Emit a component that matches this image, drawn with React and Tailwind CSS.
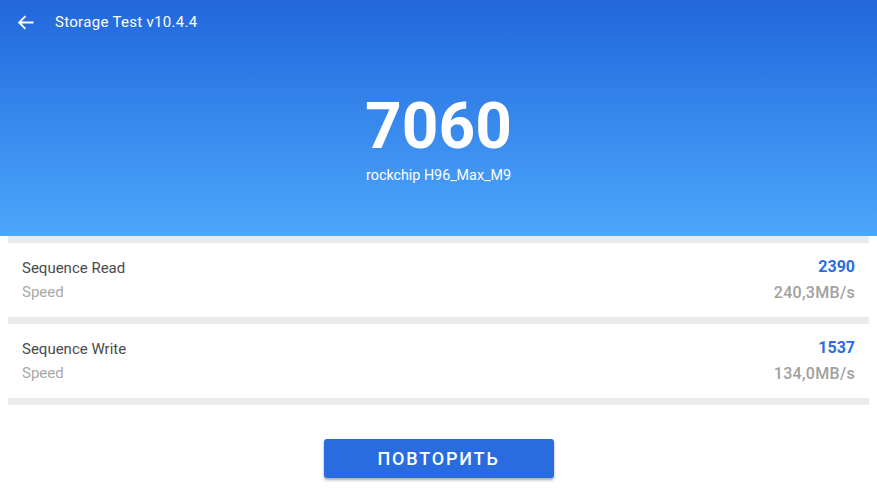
import React from "react";

const results = [
  { name: "Sequence Read", score: "2390", speed: "240,3MB/s" },
  { name: "Sequence Write", score: "1537", speed: "134,0MB/s" },
];

export default function App() {
  return (
    <div className="w-[877px] h-[493px] bg-white overflow-hidden font-['Roboto',sans-serif]">
      {/* header */}
      <div className="h-[236px] bg-gradient-to-b from-[#2267dc] to-[#4ea6fb] text-white flex flex-col">
        <div className="h-[44px] flex items-center">
          <svg className="ml-[17px] w-[17px] h-[17px]" viewBox="0 0 24 24" fill="none" stroke="white" strokeWidth="2.6" strokeLinecap="square">
            <path d="M22 12H4M11 4l-8 8 8 8" />
          </svg>
          <span className="ml-[21px] text-[15px] tracking-[0.3px]">Storage Test v10.4.4</span>
        </div>
        <div className="flex flex-col items-center mt-[43px]">
          <div className="text-[64px] font-bold leading-[80px]">7060</div>
          <div className="text-[14.3px] leading-[18px] -mt-[1px]">rockchip H96_Max_M9</div>
        </div>
      </div>

      {/* results */}
      <div className="mx-2 bg-[#ebebeb] flex flex-col gap-[7px] py-[7px]">
        {results.map((r) => (
          <div key={r.name} className="bg-white h-[74px] px-[14px] flex justify-between items-center">
            <div className="flex flex-col gap-[6px]">
              <span className="text-[15px] text-[#4a4a4a] leading-[18px]">{r.name}</span>
              <span className="text-[15px] text-[#a8a8a8] leading-[18px]">Speed</span>
            </div>
            <div className="flex flex-col items-end gap-[8px]">
              <span className="text-[16px] font-bold text-[#2a6de0] leading-[18px]">{r.score}</span>
              <span className="text-[16px] font-medium text-[#a0a0a0] leading-[18px] tracking-[0.3px]">{r.speed}</span>
            </div>
          </div>
        ))}
      </div>

      <div className="flex justify-center mt-[34px]">
        <button className="w-[230px] h-[39px] rounded-[3px] bg-[#286ce0] text-white text-[18px] font-medium tracking-[1.8px] shadow-[0_2px_3px_rgba(0,0,0,0.35)]">
          ПОВТОРИТЬ
        </button>
      </div>
    </div>
  );
}
